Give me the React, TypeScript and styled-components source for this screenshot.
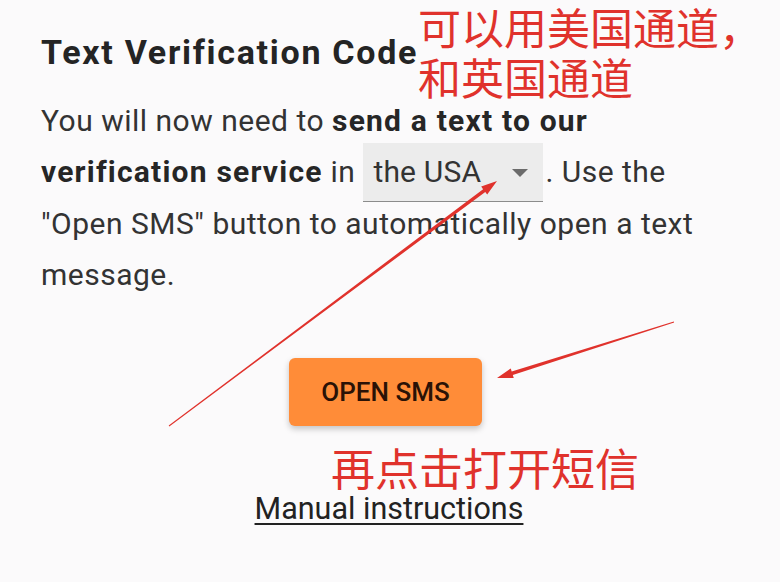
import React from 'react'
import styled, { createGlobalStyle } from 'styled-components'

const GlobalStyle = createGlobalStyle`
  html, body {
    margin: 0;
    padding: 0;
    background: #fbfafb;
  }
  body {
    font-family: Roboto, "Liberation Sans", "Noto Sans CJK SC", sans-serif;
    color: #303030;
  }
`

const App = () => {
  return (
    <Page>
      <GlobalStyle />
      <Content>
        <Title>Text Verification Code</Title>
        <Text>
          You will now need to <b>send a text to our verification service</b> in{' '}
          <Select>
            the USA
            <Caret />
          </Select>
          . Use the "Open SMS" button to automatically open a text message.
        </Text>
        <ButtonRow>
          <SmsButton>OPEN SMS</SmsButton>
        </ButtonRow>
        <LinkRow>
          <ManualLink href="#">Manual instructions</ManualLink>
        </LinkRow>
      </Content>

      <Note top={1} left={418} size={43}>
        可以用美国通道，
        <br />
        和英国通道
      </Note>
      <Note top={442} left={331} size={44}>
        再点击打开短信
      </Note>

      <Arrows viewBox="0 0 780 582">
        <Arrow from={[169, 426]} to={[497, 181]} />
        <Arrow from={[674, 322]} to={[497, 378]} />
      </Arrows>
    </Page>
  )
}

export default App

const Arrow = ({ from, to }: { from: [number, number]; to: [number, number] }) => {
  const [x1, y1] = from
  const [x2, y2] = to
  const dx = x2 - x1
  const dy = y2 - y1
  const len = Math.hypot(dx, dy)
  const ux = dx / len
  const uy = dy / len
  const nx = -uy
  const ny = ux
  const head = 16
  const bx = x2 - ux * head
  const by = y2 - uy * head
  const pts = [
    [x1 + nx * 0.5, y1 + ny * 0.5],
    [bx + nx * 1.8, by + ny * 1.8],
    [bx + nx * 5, by + ny * 5],
    [x2, y2],
    [bx - nx * 5, by - ny * 5],
    [bx - nx * 1.8, by - ny * 1.8],
    [x1 - nx * 0.5, y1 - ny * 0.5],
  ]
  return <polygon points={pts.map((p) => p.join(',')).join(' ')} fill="#e0322c" />
}

const Page = styled.div`
  position: relative;
  width: 780px;
  height: 582px;
  overflow: hidden;
`
const Content = styled.div`
  padding: 32px 0 0 41px;
  width: 674px;
`
const Title = styled.h2`
  margin: 0 0 23px;
  font-size: 34px;
  font-weight: 700;
  letter-spacing: 1.7px;
  color: #242424;
  line-height: 40px;
  white-space: nowrap;
`
const Text = styled.p`
  margin: 0;
  font-size: 30px;
  line-height: 51px;
  letter-spacing: 0.5px;
  color: #333;
  b {
    font-weight: 700;
    letter-spacing: 1.2px;
    color: #262626;
  }
`
const Select = styled.span`
  display: inline-block;
  position: relative;
  box-sizing: border-box;
  width: 180px;
  height: 59px;
  margin: -4px 2px -4px 0;
  padding: 0 0 0 10px;
  background: #ececec;
  border-bottom: 1.5px solid #8c8c8c;
  line-height: 58px;
  letter-spacing: 0.2px;
  color: #333;
`
const Caret = styled.span`
  position: absolute;
  right: 15px;
  top: 26px;
  width: 0;
  height: 0;
  border-left: 8px solid transparent;
  border-right: 8px solid transparent;
  border-top: 8px solid #6b6b6b;
`
const ButtonRow = styled.div`
  display: flex;
  justify-content: center;
  margin-top: 58px;
  padding-left: 15px;
`
const SmsButton = styled.button`
  width: 193px;
  height: 68px;
  border: none;
  border-radius: 6px;
  background: #ff8c38;
  color: #2a1206;
  font-family: Roboto, "Liberation Sans", sans-serif;
  font-size: 26px;
  font-weight: 500;
  box-shadow: 0 3px 6px rgba(0, 0, 0, 0.22);
`
const LinkRow = styled.div`
  display: flex;
  justify-content: center;
  margin-top: 65px;
  padding-left: 22px;
  line-height: 36px;
`
const ManualLink = styled.a`
  font-size: 30.5px;
  color: #222;
  text-decoration: underline;
  text-underline-offset: 4px;
  text-decoration-thickness: 1.5px;
`
const Note = styled.div<{ top: number; left: number; size: number }>`
  position: absolute;
  top: ${({ top }) => top}px;
  left: ${({ left }) => left}px;
  font-family: "Noto Sans CJK SC", sans-serif;
  font-size: ${({ size }) => size}px;
  line-height: 50px;
  color: #e0322c;
  white-space: nowrap;
`
const Arrows = styled.svg`
  position: absolute;
  inset: 0;
  width: 780px;
  height: 582px;
  pointer-events: none;
`
